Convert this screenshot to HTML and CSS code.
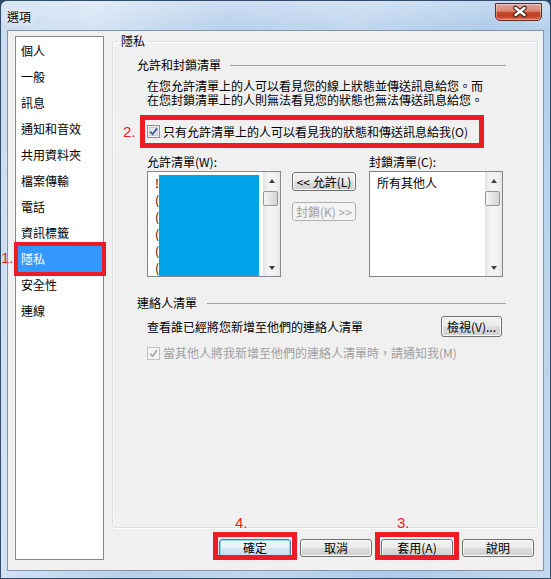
FILE: index.html
```html
<!DOCTYPE html>
<html lang="zh-Hant">
<head>
    <meta charset="UTF-8">
    <meta name="viewport" content="width=device-width, initial-scale=1.0">
    <title>選項</title>
    <link rel="stylesheet" href="styles.css">
</head>
<body>

<div class="window">
    <div class="titlebar">
        <span class="title">選項</span>
        <button class="close" aria-label="關閉">
            <svg width="47" height="18" viewBox="0 0 47 18">
                <path d="M20.5 5 L29.5 12 M29.5 5 L20.5 12" stroke="#3a211c" stroke-width="4.6" stroke-linecap="round" fill="none"/>
                <path d="M20.5 5 L29.5 12 M29.5 5 L20.5 12" stroke="#ffffff" stroke-width="2.4" stroke-linecap="round" fill="none"/>
            </svg>
        </button>
    </div>

    <div class="client">
        <ul class="nav">
            <li>個人</li>
            <li>一般</li>
            <li>訊息</li>
            <li>通知和音效</li>
            <li>共用資料夾</li>
            <li>檔案傳輸</li>
            <li>電話</li>
            <li>資訊標籤</li>
            <li class="selected"><span class="mark mark-nav">1.</span>隱私</li>
            <li>安全性</li>
            <li>連線</li>
        </ul>

        <div class="main">
            <fieldset class="group">
                <legend>隱私</legend>
                <div class="group-body">
                    <div class="section-head"><span>允許和封鎖清單</span><span class="rule"></span></div>
                    <p class="desc">在您允許清單上的人可以看見您的線上狀態並傳送訊息給您。而<br>在您封鎖清單上的人則無法看見您的狀態也無法傳送訊息給您。</p>

                    <div class="check-row">
                        <span class="mark">2.</span>
                        <label class="red-box">
                            <svg class="cb" width="13" height="13" viewBox="0 0 13 13">
                                <rect x="0.5" y="0.5" width="12" height="12" fill="#f6f6f6" stroke="#8f8f8f"/>
                                <rect x="2.5" y="2.5" width="8" height="8" fill="#e6e8ec" stroke="#c6cad2"/>
                                <path d="M3.2 6.6 L5.6 9.2 L10 3.4" stroke="#3c5a9a" stroke-width="1.8" fill="none"/>
                            </svg>
                            只有允許清單上的人可以看見我的狀態和傳送訊息給我(O)
                        </label>
                    </div>

                    <div class="lists">
                        <div class="list-col">
                            <div class="list-label">允許清單(W):</div>
                            <div class="listbox">
                                <div class="list-items">
                                    <div>!</div>
                                    <div>(</div>
                                    <div>(</div>
                                    <div>(</div>
                                    <div>(</div>
                                    <div>(</div>
                                </div>
                                <div class="redact"></div>
                                <div class="scrollbar">
                                    <div class="arrow up"></div>
                                    <div class="thumb"></div>
                                    <div class="spacer"></div>
                                    <div class="arrow down"></div>
                                </div>
                            </div>
                        </div>
                        <div class="move-col">
                            <button class="btn small">&lt;&lt; 允許(L)</button>
                            <button class="btn small" disabled>封鎖(K) &gt;&gt;</button>
                        </div>
                        <div class="list-col">
                            <div class="list-label">封鎖清單(C):</div>
                            <div class="listbox">
                                <div class="list-items">
                                    <div>所有其他人</div>
                                </div>
                                <div class="scrollbar">
                                    <div class="arrow up"></div>
                                    <div class="thumb"></div>
                                    <div class="spacer"></div>
                                    <div class="arrow down"></div>
                                </div>
                            </div>
                        </div>
                    </div>

                    <div class="section-head contacts"><span>連絡人清單</span><span class="rule"></span></div>
                    <div class="view-row">
                        <span>查看誰已經將您新增至他們的連絡人清單</span>
                        <button class="btn view">檢視(V)...</button>
                    </div>
                    <label class="disabled-row">
                        <svg class="cb" width="13" height="13" viewBox="0 0 13 13">
                            <rect x="0.5" y="0.5" width="12" height="12" fill="#f4f4f4" stroke="#c2c2c2"/>
                            <path d="M3.2 6.6 L5.6 9.2 L10 3.4" stroke="#a9a9a9" stroke-width="1.8" fill="none"/>
                        </svg>
                        當其他人將我新增至他們的連絡人清單時，請通知我(M)
                    </label>
                </div>
            </fieldset>

            <div class="actions">
                <div class="flag"><span class="mark">4.</span><button class="btn default">確定</button></div>
                <button class="btn">取消</button>
                <div class="flag"><span class="mark">3.</span><button class="btn">套用(A)</button></div>
                <button class="btn">說明</button>
            </div>
        </div>
    </div>
</div>

</body>
</html>
```

FILE: styles.css
```css
* {
    box-sizing: border-box;
}
body {
    margin: 0;
    background-color: #2d4a66;
    font-family: "Noto Sans CJK TC", sans-serif;
    font-size: 12px;
    color: #000;
    overflow: hidden;
}
.window {
    width: 551px;
    height: 579px;
    border: 1px solid #304e6c;
    border-radius: 7px 7px 0 0;
    display: flex;
    flex-direction: column;
    background:
        linear-gradient(180deg, rgba(255, 255, 255, 0.3), rgba(255, 255, 255, 0) 30px),
        linear-gradient(100deg, #c9dcf0 0%, #d3e3f4 15%, #b7d0ea 35%, #c0d6ee 55%, #aecbe9 75%, #c4d8ee 100%);
}

/* title bar */
.titlebar {
    height: 29px;
    flex: none;
    display: flex;
    justify-content: space-between;
    align-items: flex-start;
}
.title {
    padding: 8px 0 0 6px;
    line-height: 16px;
    text-shadow: 0 0 6px #fff, 0 0 3px #fff;
}
.close {
    width: 47px;
    height: 18px;
    margin: 2px 8px 0 0;
    padding: 0;
    border: 1px solid #5a2a25;
    border-radius: 0 0 5px 5px;
    background: linear-gradient(#e8a493 0%, #d88571 45%, #c5492f 52%, #c13d26 75%, #d5735c 100%);
    box-shadow: inset 0 0 0 1px rgba(255, 255, 255, 0.35);
}
.close svg {
    display: block;
    margin: -1px 0 0 -1px;
}

/* client area */
.client {
    flex: 1;
    display: flex;
    margin: 0 6px 7px 6px;
    border: 1px solid #8196ae;
    background-color: #f0f0f0;
}
.nav {
    list-style: none;
    width: 89px;
    margin: 5px 0 10px 7px;
    padding: 1px 0 0;
    border: 1px solid #828790;
    background-color: #fff;
}
.nav li {
    position: relative;
    height: 26px;
    line-height: 26px;
    margin: 0 1px 0 2px;
    padding-left: 3px;
}
.nav li.selected {
    background-color: #3399ff;
    color: #fff;
    outline: 4px solid #ed1c24;
}
.mark {
    color: #ed1c24;
    font-family: "Liberation Sans", sans-serif;
    font-size: 15px;
}
.mark-nav {
    position: absolute;
    left: -17px;
    top: -1px;
}

.main {
    flex: 1;
    min-width: 0;
    display: flex;
    flex-direction: column;
    margin: 0 5px 0 8px;
}
.group {
    flex: 1;
    min-width: 0;
    margin: 2px 0 0;
    padding: 0;
    border: 1px solid #d5dfe5;
    border-radius: 3px;
    box-shadow: inset 1px 1px 0 #fff, 1px 1px 0 #fff;
}
.group legend {
    margin-left: 5px;
    padding: 0 3px;
    line-height: 16px;
}
.group-body {
    padding: 8px 31px 0 24px;
}
.section-head {
    display: flex;
    align-items: center;
    line-height: 16px;
}
.section-head .rule {
    flex: 1;
    height: 1px;
    margin: 1px 0 0 9px;
    background-color: #a0a0a0;
}
.desc {
    margin: 6px 0 0;
    padding-left: 10px;
    line-height: 14px;
}
.check-row {
    display: flex;
    align-items: center;
    margin: 8px 0 0 -14px;
}
.check-row .mark {
    width: 17px;
}
.red-box {
    width: 344px;
    height: 33px;
    display: flex;
    align-items: center;
    padding-left: 2px;
    border: 5px solid #ed1c24;
}
.cb {
    flex: none;
    display: block;
    margin-right: 3px;
}

/* allow / block lists */
.lists {
    display: flex;
    margin-top: 6px;
    padding-left: 10px;
}
.list-col {
    width: 134px;
}
.list-label {
    line-height: 16px;
}
.listbox {
    position: relative;
    height: 106px;
    margin-top: 1px;
    display: flex;
    border: 1px solid #828790;
    background-color: #fff;
}
.list-items {
    flex: 1;
    padding: 2px 0 0 7px;
    line-height: 17px;
    overflow: hidden;
}
.redact {
    position: absolute;
    left: 11px;
    top: 3px;
    width: 100px;
    bottom: 0;
    background-color: #00a2e8;
}
.scrollbar {
    width: 17px;
    display: flex;
    flex-direction: column;
    background: linear-gradient(90deg, #e3e3e3, #f3f3f3 30%, #f3f3f3 70%, #e6e6e6);
}
.arrow {
    height: 17px;
    display: flex;
    align-items: center;
    justify-content: center;
}
.arrow::before {
    content: "";
    border-left: 3.5px solid transparent;
    border-right: 3.5px solid transparent;
}
.arrow.up::before {
    border-bottom: 4px solid #404040;
}
.arrow.down::before {
    border-top: 4px solid #404040;
}
.thumb {
    height: 15px;
    margin: 2px 2px 0 0;
    border: 1px solid #979797;
    border-radius: 2px;
    background: linear-gradient(90deg, #f6f6f6, #e4e4e4 50%, #d4d4d4);
}
.spacer {
    flex: 1;
}
.move-col {
    width: 64px;
    margin: 0 13px 0 11px;
    padding-top: 18px;
    display: flex;
    flex-direction: column;
    gap: 11px;
}

/* buttons */
.btn {
    height: 18px;
    padding: 0;
    font: inherit;
    line-height: 16px;
    color: #000;
    border: 1px solid #707070;
    border-radius: 3px;
    background: linear-gradient(#f2f2f2 0%, #ebebeb 50%, #dddddd 50%, #cfcfcf 100%);
    box-shadow: inset 0 0 0 1px #fcfcfc;
}
.btn:disabled {
    color: #a0a0a0;
    border-color: #adb2b5;
    background: #f4f4f4;
    box-shadow: none;
}
.btn.small {
    height: 19px;
}
.btn.view {
    width: 61px;
    height: 21px;
}
.btn.default {
    border-color: #3c7fb1;
    background: linear-gradient(#f0f7fb 0%, #e6f1f8 50%, #d6e6f0 50%, #c9dde9 100%);
    box-shadow: inset 0 0 0 1px #8fdcf6;
}

.contacts {
    margin-top: 18px;
}
.section-head.contacts .rule {
    margin-left: 10px;
}
.view-row {
    display: flex;
    justify-content: space-between;
    align-items: center;
    margin-top: 5px;
    padding: 0 4px 0 10px;
}
.disabled-row {
    display: flex;
    align-items: center;
    margin-top: 9px;
    padding-left: 10px;
    line-height: 14px;
    color: #a0a0a0;
}

.actions {
    display: flex;
    justify-content: flex-end;
    gap: 9px;
    margin: 11px 4px 13px 0;
}
.actions .btn {
    display: block;
    width: 72px;
}
.flag {
    position: relative;
}
.flag .mark {
    position: absolute;
    top: -24px;
    left: 16px;
    line-height: 16px;
}
/* annotation frame around the flagged buttons */
.flag::after {
    content: "";
    position: absolute;
    left: -6px;
    right: -6px;
    top: -7px;
    bottom: -3px;
    border: 5px solid #ed1c24;
    pointer-events: none;
}
```
